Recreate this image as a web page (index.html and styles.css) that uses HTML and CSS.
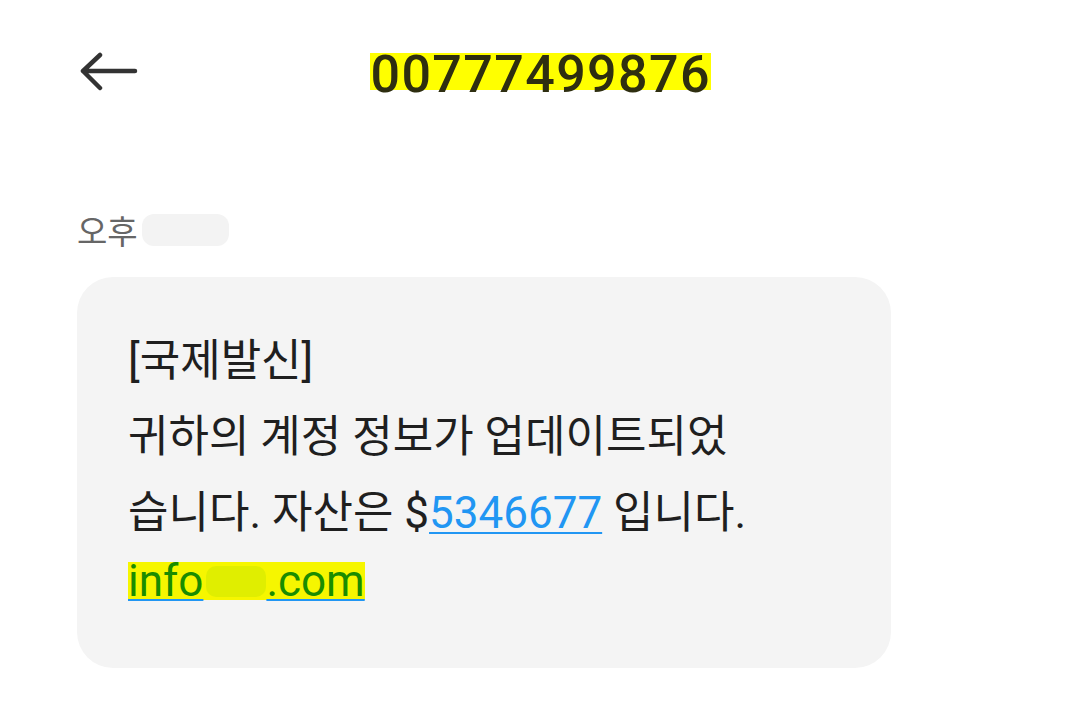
FILE: index.html
```html
<html lang="ko">
<head>
    <meta charset="UTF-8">
    <meta name="viewport" content="width=device-width, initial-scale=1.0">
    <title>메시지</title>
    <link rel="stylesheet" href="styles.css">
</head>
<body>
    <div class="header">
        <span class="back">
            <svg width="58" height="40" viewBox="0 0 58 40">
                <path d="M20 3 L3 19 L20 36 M3 19 L55 19" fill="none" stroke="#333" stroke-width="4.5" stroke-linecap="round" stroke-linejoin="round"/>
            </svg>
        </span>
        <h1 class="title"><span class="mark">00777499876</span></h1>
    </div>

    <div class="thread">
        <div class="time">오후<span class="blur"></span></div>
        <div class="bubble">
            <p>[국제발신]<br>귀하의 계정 정보가 업데이트되었<br>습니다. 자산은 $<a class="num">5346677</a> 입니다.</p>
            <div class="mailline"><a class="mail"><span class="mark2">info<span class="blur2"></span>.com</span></a></div>
        </div>
    </div>
</body>
</html>
```

FILE: styles.css
```css
body {
    margin: 0;
    background-color: #fff;
    font-family: Roboto, "Noto Sans CJK KR", sans-serif;
    color: #1f1f1f;
}
.header {
    height: 154px;
    position: relative;
    display: flex;
    justify-content: center;
    align-items: center;
    padding-bottom: 4px;
    box-sizing: border-box;
}
.back {
    position: absolute;
    left: 80px;
    top: 52px;
    display: flex;
}
.title {
    margin: 0;
    font-size: 52px;
    font-weight: 500;
    color: #2e2e10;
    letter-spacing: 1.4px;
    line-height: 1;
}
.mark {
    background: linear-gradient(transparent 0, transparent 15%, #ffff00 15%, #ffff00 75%, transparent 75%);
    margin-right: -1.4px;
}
.thread {
    padding: 58px 0 0 77px;
}
.time {
    display: flex;
    align-items: center;
    font-size: 33px;
    color: #666;
    height: 36px;
}
.blur {
    display: inline-block;
    width: 87px;
    height: 32px;
    border-radius: 12px;
    background-color: #f3f3f3;
    margin-left: 4px;
}
.bubble {
    margin-top: 29px;
    width: 814px;
    height: 391px;
    box-sizing: border-box;
    background-color: #f4f4f4;
    border-radius: 36px;
    padding: 46px 51px 0;
}
.bubble p {
    margin: 0;
    font-size: 44px;
    line-height: 76px;
    color: #1f1f1f;
}
.num {
    color: #2196f3;
    text-decoration: underline;
    text-decoration-thickness: 2px;
    text-underline-offset: 4px;
}
.mailline {
    font-size: 44px;
    line-height: 56px;
    margin-top: 2px;
}
.mail {
    color: #1a8c00;
    text-decoration: underline;
    text-decoration-color: #2196f3;
    text-decoration-thickness: 2px;
    text-underline-offset: 3px;
}
.mark2 {
    background: linear-gradient(transparent 0, transparent 13%, #f6f600 13%, #f6f600 86%, transparent 86%);
}
.blur2 {
    display: inline-block;
    width: 60px;
    height: 31px;
    border-radius: 10px;
    background-color: #e0ee00;
    vertical-align: -1px;
    margin-left: 3px;
}
```
